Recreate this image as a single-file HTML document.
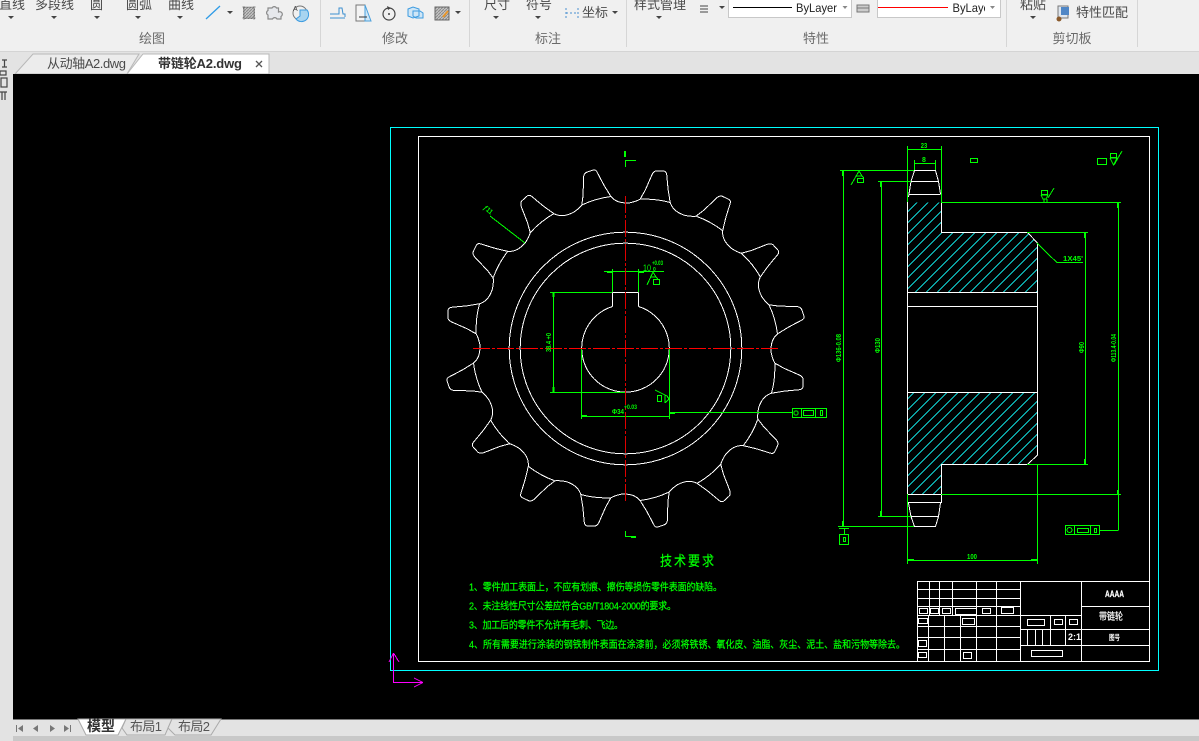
<!DOCTYPE html>
<html><head><meta charset="utf-8"><title>CAD</title>
<style>
html,body{margin:0;padding:0;width:1199px;height:741px;overflow:hidden;background:#f0f0f0}
svg{display:block}
text{font-family:"Liberation Sans","Noto Sans CJK SC",sans-serif}
.u{font-size:13px;fill:#4a4a4a}
.g{font-size:13px;fill:#6a6a6a;text-anchor:middle}
.d{font-size:7px;fill:#0f0;font-weight:bold}
.t{font-size:9px;fill:#0f0;stroke:#0f0;stroke-width:.2px}
.w{fill:#fff;stroke:#fff;stroke-width:.2px}
</style></head><body>
<svg width="1199" height="741" viewBox="0 0 1199 741" xmlns="http://www.w3.org/2000/svg">
<defs>
<clipPath id="c"><path d="M907.5 202.5H941.5V232.5H1027.5L1037.5 243V292.5H907.5ZM907.5 392.5H1037.5V455L1027.5 464.5H941.5V494.5H907.5Z"/></clipPath>
<pattern id="ih" patternUnits="userSpaceOnUse" width="3" height="3"><rect width="3" height="3" fill="#c4c4c4"/><path d="M0 3L3 0" stroke="#8a8a8a"/></pattern>
<path id="tp" fill="none" d="M14.7 -149.3C17 -154 18 -155 19.7 -158.3L26.3 -173.3Q28 -177.5 31.3 -177.7L38.7 -177.3Q41 -177 41.3 -173.3Q42 -165 42.7 -158.3L44.7 -146C47 -139 52 -135.500 59.700 -133Q66 -131.800 70.700 -132.300M14.7 -149.3Q30 -150 44.7 -146"/>
<path id="ar" d="M0 0h6l-3 3z" fill="#444"/>
</defs>

<!-- ribbon -->
<rect width="1199" height="52" fill="#f0f0f0"/>
<rect y="51" width="1199" height="1" fill="#d4d4d4"/>
<rect y="52" width="1199" height="22" fill="#e3e3e3"/>
<g fill="#d6d6d6"><rect x="320" width="1" height="47"/><rect x="469" width="1" height="47"/><rect x="626" width="1" height="47"/><rect x="1006" width="1" height="47"/><rect x="1137" width="1" height="47"/></g>
<g class="u">
<text x="-1" y="9" class="u">直线</text><text x="35" y="9" class="u">多段线</text><text x="90" y="9" class="u">圆</text><text x="126" y="9" class="u">圆弧</text><text x="168" y="9" class="u">曲线</text>
<text x="484" y="9" class="u">尺寸</text><text x="526" y="9" class="u">符号</text><text x="582" y="17" class="u">坐标</text><text x="634" y="9" class="u">样式管理</text>
<text x="1020" y="9" class="u">粘贴</text><text x="1076" y="17" class="u">特性匹配</text>
</g>
<text x="152" y="43" class="g">绘图</text><text x="395" y="43" class="g">修改</text><text x="548" y="43" class="g">标注</text><text x="816" y="43" class="g">特性</text><text x="1072" y="43" class="g">剪切板</text>
<use href="#ar" x="8" y="16"/><use href="#ar" x="51" y="16"/><use href="#ar" x="94" y="16"/><use href="#ar" x="135" y="16"/><use href="#ar" x="177" y="16"/>
<use href="#ar" x="227" y="11"/><use href="#ar" x="455" y="11"/><use href="#ar" x="493" y="16"/><use href="#ar" x="535" y="16"/><use href="#ar" x="612" y="11"/><use href="#ar" x="656" y="16"/><use href="#ar" x="719" y="6"/><use href="#ar" x="1030" y="16"/>

<!-- icons -->
<path d="M206 19L220 6" stroke="#2e9be6" stroke-width="1.3" fill="none"/>
<rect x="243.500" y="7.500" width="11" height="11" fill="url(#ih)" stroke="#777" stroke-dasharray="2 1"/>
<path d="M242 7h14M242 18h14M244 6v14M254 6v14" stroke="#777" stroke-width=".6" fill="none"/>
<path d="M268 8h4a2.500 2.500 0 0 1 4.500 0h2v4a2.500 2.500 0 0 1 2.500 4.500v2.500h-4a2.500 2.500 0 0 0-4.500 0h-4.500v-4a2.500 2.500 0 0 1 0-4.500z" fill="#e6e8ec" stroke="#8a8a8a" stroke-width="1.2"/>
<circle cx="300" cy="13" r="7" fill="none" stroke="#777"/><path d="M300 10h7a7 7 0 0 1-11 9l4-3z" fill="#a8d4f0" stroke="#3c9be0"/><text x="293" y="11" font-size="7" fill="#444">A</text>
<path d="M330 18h15M330 14h9V8h3l1 6h2v3" fill="none" stroke="#3c8fd0" stroke-width="1"/>
<path d="M356 5h9v16h-9z" fill="#f4f4f4" stroke="#777"/><path d="M365 5l6 16h-6z" fill="#cfe6f6" stroke="#4aa0dc"/><path d="M359 17h8" stroke="#333"/>
<circle cx="389" cy="14" r="6" fill="none" stroke="#444" stroke-width="1.2"/><circle cx="389" cy="14" r="1" fill="#444"/><path d="M387 6l4 2-3 2z" fill="#444"/>
<path d="M408 9l5-2 6 2v7l-6 2-5-2zM413 11l7 0 3 2v5h-7l-3-2z" fill="#cfe6f6" stroke="#3c9be0"/>
<rect x="435" y="7" width="14" height="13" fill="url(#ih)" stroke="#666"/><path d="M443 17l5-6" stroke="#e8962a" stroke-width="2"/>
<g fill="none" stroke="#4a90d0"><path stroke-dasharray="2 2" d="M566 8v11M578 8v11M566 13h12"/></g>
<path d="M700 6h8M700 9h8M700 12h8" stroke="#444" fill="none"/>
<path d="M857 5h12v7h-12zM857 8h12" fill="#ccc" stroke="#777"/>
<rect x="1058" y="6" width="10" height="12" fill="#dfe6ee" stroke="#777"/><rect x="1061" y="7" width="8" height="8" fill="#4f86c6"/><circle cx="1059" cy="19" r="2.5" fill="#8a5a2c"/>

<!-- combos -->
<rect x="728.5" y="-2" width="123" height="19.5" fill="#fff" stroke="#c8c8c8"/>
<rect x="733" y="7" width="59" height="1" fill="#000"/>
<text x="796" y="12" font-size="12" fill="#222" textLength="41" lengthAdjust="spacingAndGlyphs">ByLayer</text>
<path d="M842.5 6h5l-2.5 3z" fill="#888"/>
<rect x="877.5" y="-2" width="123" height="19.5" fill="#fff" stroke="#c8c8c8"/>
<rect x="878" y="7" width="70" height="1" fill="#ff0000"/>
<svg x="952" y="0" width="33" height="17"><text x="0.5" y="12" font-size="12" fill="#222" textLength="41" lengthAdjust="spacingAndGlyphs">ByLayer</text></svg>
<path d="M990 6h5l-2.500 3z" fill="#888"/>

<!-- file tabs -->
<path d="M15 74L33 54H139L127 74Z" fill="#ececec" stroke="#b8b8b8"/>
<path d="M127 74L143 54H269V74Z" fill="#fff" stroke="#b8b8b8"/>
<text x="47" y="68" class="u" textLength="79">从动轴A2.dwg</text>
<text x="158" y="68" font-size="13" font-weight="bold" fill="#333" textLength="84">带链轮A2.dwg</text>
<path d="M256 61l6 6M262 61l-6 6" stroke="#555" stroke-width="1.3"/>

<!-- left strip -->
<rect y="74" width="13" height="667" fill="#e3e3e3"/>
<rect y="52" width="13" height="22" fill="#e3e3e3"/>
<g fill="none" stroke="#444" stroke-width="1.2">
<path d="M2 60h5M4.500 60v7M2 67h5"/><rect x="0" y="71" width="6" height="4"/><rect x="1" y="78" width="6" height="9"/><path d="M0 92h7M2 92v8M5 92v8"/>
</g>

<!-- canvas -->
<rect x="13" y="74" width="1186" height="645" fill="#000"/>
<g shape-rendering="crispEdges" fill="none" stroke-width="1">
<rect x="390.500" y="127.500" width="768" height="543" stroke="#0ff"/>
<rect x="418.500" y="136.500" width="731" height="525" stroke="#fff"/>

<!-- sprocket -->
<g transform="translate(625.5 348.5)" stroke="#fff">
<use href="#tp"/><use href="#tp" transform="rotate(22.5)"/><use href="#tp" transform="rotate(45)"/><use href="#tp" transform="rotate(67.5)"/>
<use href="#tp" transform="rotate(90)"/><use href="#tp" transform="rotate(112.5)"/><use href="#tp" transform="rotate(135)"/><use href="#tp" transform="rotate(157.5)"/>
<use href="#tp" transform="rotate(180)"/><use href="#tp" transform="rotate(202.5)"/><use href="#tp" transform="rotate(225)"/><use href="#tp" transform="rotate(247.5)"/>
<use href="#tp" transform="rotate(270)"/><use href="#tp" transform="rotate(292.5)"/><use href="#tp" transform="rotate(315)"/><use href="#tp" transform="rotate(337.5)"/>
<circle r="116.3"/><circle r="105.3"/>
</g>
<path stroke="#fff" d="M612.500 292.500H638.500M612.500 292.500V306.500M638.500 292.500V306.500M612.500 306.500A43.800 43.800 0 1 0 638.500 306.500"/>

<!-- sprocket dims -->
<path stroke="#0f0" d="M490 216L525 243M612.500 269V292M638.500 269V292M604 271.500H664M550 292.500H612M553.500 292V392M550 392.500H625M581.500 348V419M669.500 348V419M581 416.500H670M670 412.500H792"/>
<path stroke="#0f0" stroke-width="2" d="M607 272H612M639 272H644M553.500 293V297M553.500 387V392M670 413H675M582 416H587"/>
<rect x="792.500" y="408.500" width="34" height="9" stroke="#0f0"/>
<path stroke="#0f0" d="M801.500 408V417M815.500 408V417"/><rect x="803.500" y="410.500" width="10" height="5" stroke="#0f0"/><rect x="820.500" y="410.500" width="2" height="5" stroke="#0f0"/><circle cx="796" cy="413" r="2.200" stroke="#0f0"/>
<path stroke="#0f0" d="M647 285L653 272M653 272L656 277H651M656 277L658 279"/><rect x="653.500" y="279.500" width="6" height="5" stroke="#0f0"/>
<path stroke="#0f0" d="M655 390L667 396L669 399L665 403M665 395V403"/><rect x="657.500" y="395.500" width="4" height="6" stroke="#0f0"/>
<path stroke="#f00" stroke-dasharray="17 2 3 2" d="M473 348.500H778"/>
<path stroke="#e00000" stroke-dasharray="17 2 3 2" d="M625.500 196V501"/>
<path stroke="#0f0" d="M625.500 160.500H636M625.500 160V167M625.500 531V537M625 536.500H636"/>
<path stroke="#0f0" stroke-width="2" d="M625 151V157M631 537H636"/>

<!-- right view: hatch -->
<g clip-path="url(#c)"><path stroke="#10d0d0" d="M608.3 500l300-300M619.3 500l300-300M630.3 500l300-300M641.3 500l300-300M652.3 500l300-300M663.3 500l300-300M674.3 500l300-300M685.3 500l300-300M696.3 500l300-300M707.3 500l300-300M718.3 500l300-300M729.3 500l300-300M740.3 500l300-300M751.3 500l300-300M762.3 500l300-300M773.3 500l300-300M784.3 500l300-300M795.3 500l300-300M806.3 500l300-300M817.3 500l300-300M828.3 500l300-300M839.3 500l300-300M850.3 500l300-300M861.3 500l300-300M872.3 500l300-300M883.3 500l300-300M894.3 500l300-300M905.3 500l300-300M916.3 500l300-300M927.3 500l300-300M938.3 500l300-300M949.3 500l300-300M960.3 500l300-300M971.3 500l300-300M982.3 500l300-300M993.3 500l300-300M1004.3 500l300-300M1015.3 500l300-300M1026.3 500l300-300M1037.3 500l300-300"/></g>
<!-- right view: outline -->
<path stroke="#fff" d="M907.500 197V503M907.500 292.500H1037.500M907.500 306.500H1037.500M907.500 392.500H1037.500M941.500 202V232.500H1027.500L1037.500 243V455L1027.500 464.500H941.500V503M907.500 494.500H941.500M907.500 502.500H941.500"/>
<path stroke="#fff" d="M908.500 197L911 181.500L914.500 170.500H935.500L938.500 181.500L940.500 194M911 181.500H938.500M908.500 194.500H940.500"/>
<path stroke="#fff" d="M908.500 503L911 516.500L914.500 526.500H935.500L938.500 516.500L940.500 503M911 516.500H938.500"/>
<!-- right dims -->
<path stroke="#0f0" d="M907.500 146V202M941.500 146V202M907 149.500H942M914.500 160V170M935.500 160V170M914 163.500H936M840 170.500H914M843.500 170V527M838 526.500H914M878 181.500H911M881.500 181V517M878 516.500H911M941 202.500H1121M1118.500 202V530M941 494.500H1121M1099 530.500H1118.500M1027 232.500H1088M1085.500 232V465M1027 464.500H1088M907.500 494V564M1037.500 464V564M907 560.500H1038M1037 243L1048 254L1057 262.500H1083"/>
<path stroke="#0f0" stroke-width="2" d="M843 171V176M843 521V526M881 182V187M881 511V516M1085 233V238M1085 459V464M1118 203V208M1118 490V495M908 560H914M1031 560H1037"/>
<rect x="1065.500" y="525.500" width="34" height="9" stroke="#0f0"/>
<path stroke="#0f0" d="M1074.500 525V534M1090.500 525V534"/><rect x="1077.500" y="528.500" width="11" height="4" stroke="#0f0"/><rect x="1094.500" y="528.500" width="2" height="4" stroke="#0f0"/><circle cx="1069.500" cy="530" r="2.500" stroke="#0f0"/>
<path stroke="#0f0" d="M839 528.500H849M844.500 528V534"/><rect x="839.500" y="534.500" width="9" height="10" stroke="#0f0"/><rect x="843.500" y="537.500" width="2" height="4" stroke="#0f0"/>
<path stroke="#0f0" d="M851 185L859 171L862 176H856M862 176L864 178"/><rect x="857.500" y="178.500" width="6" height="4" stroke="#0f0"/>
<rect x="970.500" y="158.500" width="7" height="4" stroke="#0f0"/>
<rect x="1097.500" y="158.500" width="9" height="6" stroke="#0f0"/><rect x="1110.500" y="153.500" width="6" height="4" stroke="#0f0"/>
<path stroke="#0f0" d="M1110 158H1117L1113.500 165L1110 158M1114 165L1122 151"/>
<rect x="1041.500" y="190.500" width="6" height="4" stroke="#0f0"/>
<path stroke="#0f0" d="M1041 195H1048L1046 199H1043L1041 195M1044 199V202M1047 199V202M1048 198L1054 188"/>

<!-- title block -->
<g stroke="#fff">
<path d="M917.500 581.500H1149M917.500 581V661M1081.500 581V661M1081 606.500H1149M1081 629.500H1149M1081 645.500H1149M1020.500 581V661"/>
<path d="M1021 615.500H1081M1021 629.500H1081M1021 645.500H1081M1050.500 615V645M1065.500 615V645M1027.500 629V645M1035.500 629V645M1042.500 629V645"/>
<path d="M917 589.500H1021M917 598.500H1021M917 606.500H1021M917 615.500H1021M929.500 581V615M939.500 581V615M952.500 581V615M976.500 581V661M996.500 581V661"/>
<path d="M917 626.500H1021M917 637.500H1021M917 649.500H1021M928.500 615V661M944.500 615V661M960.500 615V661"/>
<rect x="1027.500" y="619.500" width="17" height="6"/><rect x="1054.500" y="619.500" width="8" height="5"/><rect x="1069.500" y="619.500" width="8" height="5"/><rect x="1031.500" y="650.500" width="31" height="6"/>
<rect x="919.500" y="608.500" width="8" height="5" fill="#000"/><rect x="930.500" y="608.500" width="8" height="5" fill="#000"/><rect x="942.500" y="608.500" width="8" height="5" fill="#000"/><rect x="955.500" y="608.500" width="21" height="6" fill="#000"/><rect x="982.500" y="608.500" width="8" height="5" fill="#000"/><rect x="1001.500" y="607.500" width="12" height="6" fill="#000"/>
<rect x="918.500" y="618.500" width="9" height="5" fill="#000"/><rect x="962.500" y="618.500" width="12" height="6" fill="#000"/><rect x="918.500" y="640.500" width="8" height="6" fill="#000"/><rect x="918.500" y="652.500" width="8" height="5" fill="#000"/><rect x="963.500" y="652.500" width="8" height="6" fill="#000"/>
</g>

<!-- UCS -->
<path stroke="#f0f" d="M393.500 683V653M393 682.500H423M393.500 653L389 662M393.500 653L399 662M423 682.500L414 678M423 682.500L414 687"/>
</g>

<!-- drawing text -->
<text x="483" y="212" class="d" transform="rotate(40 488 210)" textLength="10" lengthAdjust="spacingAndGlyphs">ƒ11</text>
<text x="643" y="271" font-size="9" fill="#0f0" textLength="8" lengthAdjust="spacingAndGlyphs">10</text>
<text x="652" y="265" font-size="6" fill="#0f0" font-weight="bold" textLength="11" lengthAdjust="spacingAndGlyphs">+0.03</text>
<text x="653" y="271" font-size="5" fill="#0f0" font-weight="bold">0</text>
<text x="612" y="414" class="d" textLength="12" lengthAdjust="spacingAndGlyphs">Φ34</text>
<text x="624" y="409" font-size="6" fill="#0f0" font-weight="bold" textLength="13" lengthAdjust="spacingAndGlyphs">+0.03</text>
<text transform="translate(551 352) rotate(-90)" class="d" textLength="19" lengthAdjust="spacingAndGlyphs">38.4 +0</text>
<text x="924" y="148" class="d" text-anchor="middle" textLength="6.500" lengthAdjust="spacingAndGlyphs">23</text>
<text x="924" y="162" class="d" text-anchor="middle">8</text>
<text transform="translate(841 362) rotate(-90)" class="d" textLength="28" lengthAdjust="spacingAndGlyphs">Φ136-0.08</text>
<text transform="translate(880 353) rotate(-90)" class="d" textLength="15" lengthAdjust="spacingAndGlyphs">Φ130</text>
<text transform="translate(1084 353) rotate(-90)" class="d" textLength="11" lengthAdjust="spacingAndGlyphs">Φ90</text>
<text transform="translate(1116 362) rotate(-90)" class="d" textLength="28" lengthAdjust="spacingAndGlyphs">Φ113.4-0.04</text>
<text x="1063" y="261" class="d" textLength="20" lengthAdjust="spacingAndGlyphs">1X45'</text>
<text x="967" y="559" class="d" textLength="10" lengthAdjust="spacingAndGlyphs">100</text>

<text transform="translate(660 566) scale(1 1.2)" font-size="12" fill="#0f0" stroke="#0f0" stroke-width=".2" textLength="54">技术要求</text>
<text transform="translate(469 590.500) scale(1 1.15)" class="t" textLength="253">1、零件加工表面上，不应有划痕、擦伤等损伤零件表面的缺陷。</text>
<text transform="translate(469 609.500) scale(1 1.15)" class="t" textLength="207">2、未注线性尺寸公差应符合GB/T1804-2000的要求。</text>
<text transform="translate(469 628.500) scale(1 1.15)" class="t" textLength="154">3、加工后的零件不允许有毛刺、飞边。</text>
<text transform="translate(469 648) scale(1 1.15)" class="t" textLength="436">4、所有需要进行涂装的钢铁制件表面在涂漆前，必须将铁锈、氧化皮、油脂、灰尘、泥土、盐和污物等除去。</text>

<text x="1105" y="597" font-size="9" class="w" font-weight="bold" textLength="19" lengthAdjust="spacingAndGlyphs">AAAA</text>
<text transform="translate(1099 620) scale(1 1.25)" font-size="8" class="w">带链轮</text>
<text transform="translate(1109 640) scale(1 1.3)" font-size="5.500" class="w">图号</text>
<text x="1068" y="640" font-size="9" fill="#fff" font-weight="bold">2:1</text>

<!-- bottom bar -->
<rect x="13" y="719" width="1186" height="17" fill="#e3e3e3"/>
<rect x="13" y="719" width="1186" height="1" fill="#777"/>
<rect x="13" y="736" width="1186" height="5" fill="#c8c8c8"/>
<g fill="#777">
<path d="M16 725v7h1v-7zM23 725l-5 3.500 5 3.500z"/><path d="M38 725l-5 3.500 5 3.500z"/><path d="M50 725l5 3.500-5 3.500z"/><path d="M64 725l5 3.500-5 3.500zM70 725v7h1v-7z"/>
</g>
<path d="M78 719L86 735H118L126 719Z" fill="#fff" stroke="#aaa"/>
<path d="M126 719L122 728L127 735H165L172 719Z" fill="#e3e3e3" stroke="#aaa"/>
<path d="M172 719L168 728L175 735H211L221 719Z" fill="#e3e3e3" stroke="#aaa"/>
<text x="87" y="731" font-size="14" font-weight="bold" fill="#333" textLength="28">模型</text>
<text x="130" y="731" font-size="13" fill="#555" textLength="32">布局1</text>
<text x="178" y="731" font-size="13" fill="#555" textLength="32">布局2</text>
</svg>
</body></html>
